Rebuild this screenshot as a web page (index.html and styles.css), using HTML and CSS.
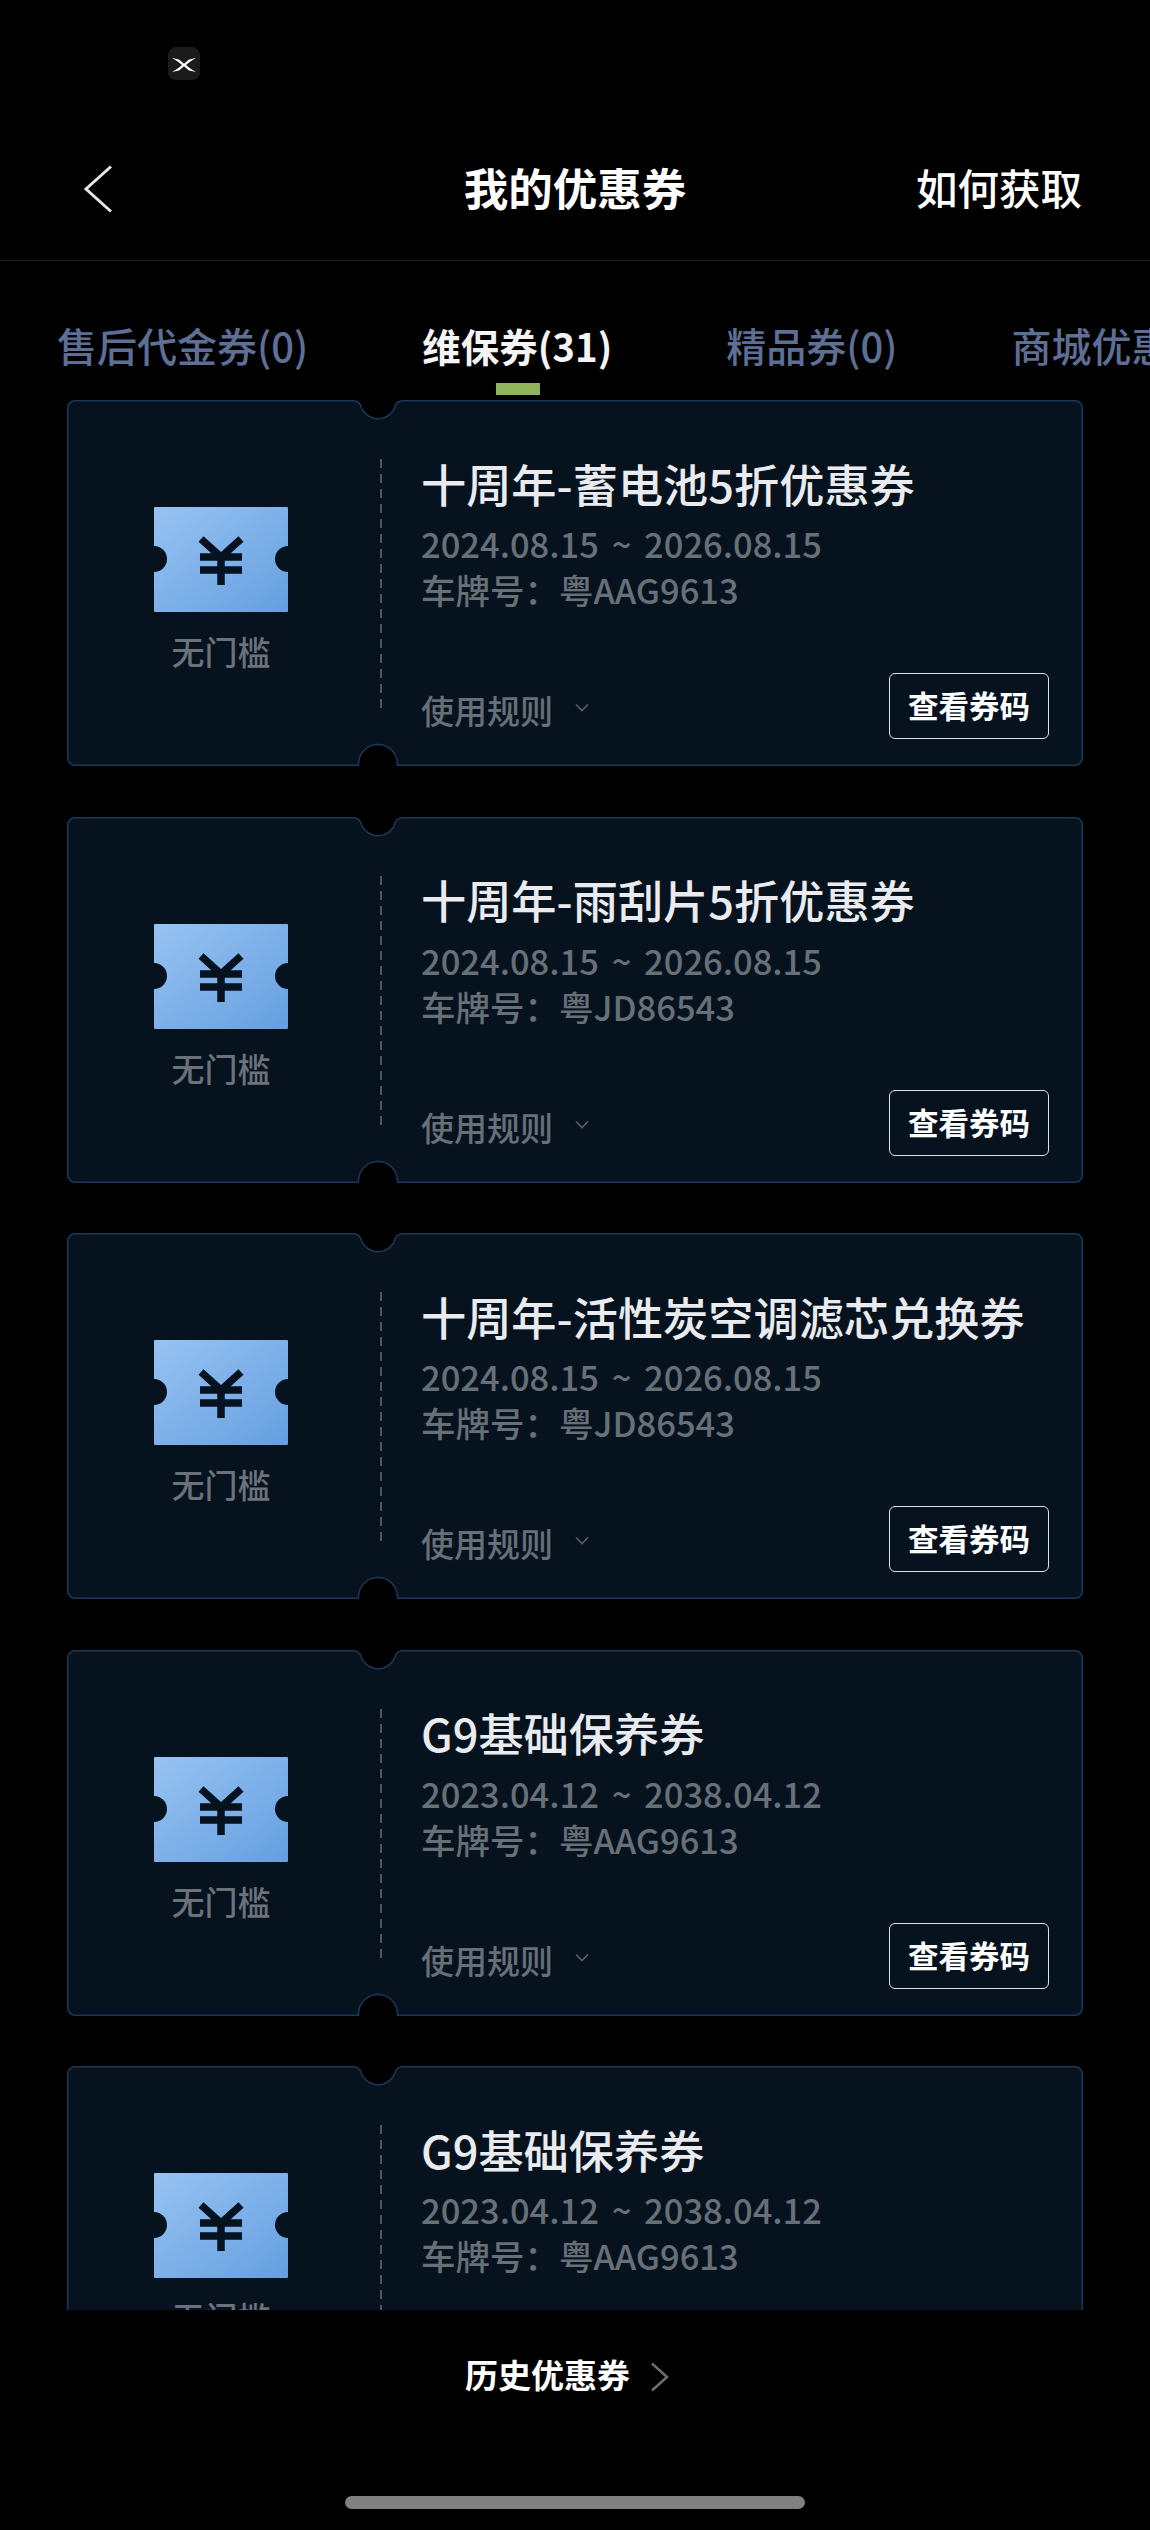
FILE: index.html
```html
<!DOCTYPE html>
<html lang="zh-CN">
<head>
    <meta charset="UTF-8">
    <meta name="viewport" content="width=device-width, initial-scale=1.0">
    <title>我的优惠券</title>
    <link rel="stylesheet" href="styles.css">
</head>
<body>
    <!-- Shared shapes -->
    <svg class="defs" width="0" height="0">
        <defs>
            <linearGradient id="ticketFill" x1="0" y1="0" x2="1" y2="1">
                <stop offset="0" stop-color="#97c3f2"/>
                <stop offset="1" stop-color="#659fe0"/>
            </linearGradient>
            <symbol id="cardShape" viewBox="0 0 1016 366">
                <path d="M8 .75H286Q291 .75 293.5 5A18 18 0 0 0 328.5 5Q331 .75 336 .75H1008A7.25 7.25 0 0 1 1015.25 8V358A7.25 7.25 0 0 1 1008 365.25H330.5V364A19 19 0 0 0 291.5 364V365.25H8A7.25 7.25 0 0 1 .75 358V8A7.25 7.25 0 0 1 8 .75Z"/>
            </symbol>
            <symbol id="ticketIcon" viewBox="0 0 134 105">
                <path fill="url(#ticketFill)" d="M1 0H133A1 1 0 0 1 134 1V39A13 13 0 0 0 134 65V104A1 1 0 0 1 133 105H1A1 1 0 0 1 0 104V65A13 13 0 0 0 0 39V1A1 1 0 0 1 1 0Z"/>
                <path fill="none" stroke="#051220" stroke-width="7.5" d="M47 32L67 50L87 32M46 50H88M46 63H88M67 50V78"/>
            </symbol>
        </defs>
    </svg>

    <!-- Status bar -->
    <div class="status-bar">
        <div class="app-badge">
            <svg width="32" height="33" viewBox="0 0 32 33"><path fill="#fff" d="M4 11L11 12.5Q14 15 16 16.7Q18 15 21 12.5L28 11Q21 15 18 18Q21 21 28 25L21 23.5Q18 21 16 19.3Q14 21 11 23.5L4 25Q11 21 14 18Q11 15 4 11Z"/></svg>
        </div>
    </div>

    <!-- Header -->
    <div class="nav">
        <svg class="nav-back" width="30" height="48" viewBox="0 0 30 48"><path fill="none" stroke="#e6e6e6" stroke-width="3" d="M28 1.5L3 24L28 46.5"/></svg>
        <div class="nav-title">我的优惠券</div>
        <div class="nav-action">如何获取</div>
    </div>

    <!-- Tabs -->
    <div class="tabs">
        <div class="tab">售后代金券(0)</div>
        <div class="tab tab-active">维保券(31)</div>
        <div class="tab">精品券(0)</div>
        <div class="tab">商城优惠券(0)</div>
    </div>

    <!-- Coupon list -->
    <div class="coupon-list">
        <div class="card">
            <svg class="card-shape"><use href="#cardShape"/></svg>
            <div class="card-left">
                <svg class="ticket" width="134" height="105"><use href="#ticketIcon"/></svg>
                <div class="ticket-label">无门槛</div>
            </div>
            <div class="card-divider"></div>
            <div class="card-body">
                <div class="card-title">十周年-蓄电池5折优惠券</div>
                <div class="card-date">2024.08.15 ~ 2026.08.15</div>
                <div class="card-info">车牌号：粤AAG9613</div>
                <div class="card-footer">
                    <div class="rules">使用规则<svg class="rules-arrow" width="16" height="10" viewBox="0 0 16 10"><path fill="none" stroke="#566069" stroke-width="1.6" d="M2 1.5L8 7.5L14 1.5"/></svg></div>
                    <div class="code-btn">查看券码</div>
                </div>
            </div>
        </div>

        <div class="card">
            <svg class="card-shape"><use href="#cardShape"/></svg>
            <div class="card-left">
                <svg class="ticket" width="134" height="105"><use href="#ticketIcon"/></svg>
                <div class="ticket-label">无门槛</div>
            </div>
            <div class="card-divider"></div>
            <div class="card-body">
                <div class="card-title">十周年-雨刮片5折优惠券</div>
                <div class="card-date">2024.08.15 ~ 2026.08.15</div>
                <div class="card-info">车牌号：粤JD86543</div>
                <div class="card-footer">
                    <div class="rules">使用规则<svg class="rules-arrow" width="16" height="10" viewBox="0 0 16 10"><path fill="none" stroke="#566069" stroke-width="1.6" d="M2 1.5L8 7.5L14 1.5"/></svg></div>
                    <div class="code-btn">查看券码</div>
                </div>
            </div>
        </div>

        <div class="card">
            <svg class="card-shape"><use href="#cardShape"/></svg>
            <div class="card-left">
                <svg class="ticket" width="134" height="105"><use href="#ticketIcon"/></svg>
                <div class="ticket-label">无门槛</div>
            </div>
            <div class="card-divider"></div>
            <div class="card-body">
                <div class="card-title">十周年-活性炭空调滤芯兑换券</div>
                <div class="card-date">2024.08.15 ~ 2026.08.15</div>
                <div class="card-info">车牌号：粤JD86543</div>
                <div class="card-footer">
                    <div class="rules">使用规则<svg class="rules-arrow" width="16" height="10" viewBox="0 0 16 10"><path fill="none" stroke="#566069" stroke-width="1.6" d="M2 1.5L8 7.5L14 1.5"/></svg></div>
                    <div class="code-btn">查看券码</div>
                </div>
            </div>
        </div>

        <div class="card">
            <svg class="card-shape"><use href="#cardShape"/></svg>
            <div class="card-left">
                <svg class="ticket" width="134" height="105"><use href="#ticketIcon"/></svg>
                <div class="ticket-label">无门槛</div>
            </div>
            <div class="card-divider"></div>
            <div class="card-body">
                <div class="card-title">G9基础保养券</div>
                <div class="card-date">2023.04.12 ~ 2038.04.12</div>
                <div class="card-info">车牌号：粤AAG9613</div>
                <div class="card-footer">
                    <div class="rules">使用规则<svg class="rules-arrow" width="16" height="10" viewBox="0 0 16 10"><path fill="none" stroke="#566069" stroke-width="1.6" d="M2 1.5L8 7.5L14 1.5"/></svg></div>
                    <div class="code-btn">查看券码</div>
                </div>
            </div>
        </div>

        <div class="card">
            <svg class="card-shape"><use href="#cardShape"/></svg>
            <div class="card-left">
                <svg class="ticket" width="134" height="105"><use href="#ticketIcon"/></svg>
                <div class="ticket-label">无门槛</div>
            </div>
            <div class="card-divider"></div>
            <div class="card-body">
                <div class="card-title">G9基础保养券</div>
                <div class="card-date">2023.04.12 ~ 2038.04.12</div>
                <div class="card-info">车牌号：粤AAG9613</div>
                <div class="card-footer">
                    <div class="rules">使用规则<svg class="rules-arrow" width="16" height="10" viewBox="0 0 16 10"><path fill="none" stroke="#566069" stroke-width="1.6" d="M2 1.5L8 7.5L14 1.5"/></svg></div>
                    <div class="code-btn">查看券码</div>
                </div>
            </div>
        </div>
    </div>

    <!-- Footer -->
    <div class="history">
        <span>历史优惠券</span>
        <svg width="20" height="30" viewBox="0 0 20 30"><path fill="none" stroke="#6e6e6e" stroke-width="2.5" d="M2 1.5L17 15L2 28.5"/></svg>
    </div>
    <div class="home-bar"></div>
</body>
</html>
```

FILE: styles.css
```css
* { box-sizing: border-box; margin: 0; padding: 0; }
body {
    width: 1150px; height: 2530px; overflow: hidden; background: #000; color: #fff;
    font-family: "Noto Sans CJK SC", "Noto Sans", sans-serif;
    display: flex; flex-direction: column;
}
.defs { position: absolute; }

/* Status bar */
.status-bar { height: 95px; padding: 47px 0 0 168px; flex-shrink: 0; }
.app-badge { width: 32px; height: 33px; border-radius: 8px; background: #1b1b1b; }
.app-badge svg { display: block; }

/* Header */
.nav {
    height: 166px; padding: 18px 68px 0; flex-shrink: 0; border-bottom: 1px solid #1c1c1c;
    display: grid; grid-template-columns: 1fr auto 1fr; align-items: center;
}
.nav-back { margin: 4px 0 0 15px; display: block; }
.nav-title { font-size: 44.5px; font-weight: 700; line-height: 60px; }
.nav-action { font-size: 41.5px; font-weight: 500; line-height: 60px; text-align: right; }

/* Tabs */
.tabs { height: 139px; padding: 56px 0 0 57px; flex-shrink: 0; display: flex; gap: 114px; white-space: nowrap; }
.tab { position: relative; font-size: 40px; font-weight: 500; line-height: 56px; color: #5e6f96; }
.tab-active { font-size: 38.5px; font-weight: 700; color: #f4f4f4; }
.tab-active::after {
    content: ""; position: absolute; left: 74px; top: 66px; width: 44px; height: 12px; background: #8fb45a;
}

/* Coupon cards */
.coupon-list { height: 1910px; padding: 0 67px; flex-shrink: 0; overflow: hidden; display: flex; flex-direction: column; gap: 50.6px; }
.card { position: relative; height: 366px; flex-shrink: 0; display: flex; }
.card-shape { position: absolute; left: 0; top: 0; width: 1016px; height: 366px; fill: #06131f; stroke: #1d375a; stroke-width: 1.5; }
.card-left { position: relative; width: 308px; margin-right: 5px; padding-top: 107px; display: flex; flex-direction: column; align-items: center; flex-shrink: 0; }
.ticket { display: block; }
.ticket-label { margin-top: 16px; font-size: 33px; line-height: 46px; font-weight: 500; color: #6b727a; }
.card-divider {
    position: relative; width: 2px; height: 249px; margin-top: 59px; flex-shrink: 0;
    background: repeating-linear-gradient(to bottom, #4a5662 0, #4a5662 9px, transparent 9px, transparent 15px);
}
.card-body { position: relative; flex: 1; padding: 56.5px 34px 0 39px; }
.card-title { font-size: 45.2px; font-weight: 500; line-height: 54px; color: #e9ebee; white-space: nowrap; }
.card-date { margin-top: 8.5px; font-size: 34.5px; word-spacing: 5px; font-weight: 500; line-height: 48px; color: #676f77; white-space: nowrap; }
.card-info { margin-top: -2px; font-size: 34.5px; font-weight: 500; line-height: 48px; color: #676f77; white-space: nowrap; }
.card-footer { margin-top: 60px; display: flex; justify-content: space-between; align-items: center; }
.rules { padding-top: 8px; font-size: 33px; font-weight: 500; line-height: 46px; color: #676f77; display: flex; align-items: center; }
.rules-arrow { margin: -4px 0 0 21px; display: block; }
.code-btn {
    width: 160px; height: 66px; border: 1.5px solid #dfe2e5; border-radius: 6px;
    font-size: 30.5px; font-weight: 700; line-height: 62px; text-align: center; color: #fff;
}

/* Footer */
.history { height: 40px; margin-top: 44px; padding-left: 465px; flex-shrink: 0; display: flex; align-items: center; gap: 20px; font-size: 33px; font-weight: 700; line-height: 40px; }
.history svg { display: block; margin-top: 6px; }
.home-bar { width: 460px; height: 13px; margin: 102px auto 0; border-radius: 7px; background: #808080; flex-shrink: 0; }
```
